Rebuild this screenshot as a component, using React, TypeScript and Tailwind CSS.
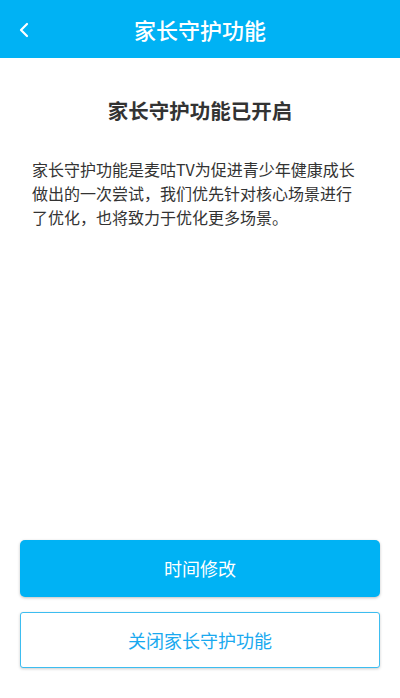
import React from "react";

export default function App() {
  const font = { fontFamily: '"Noto Sans CJK SC", "Noto Sans", sans-serif' };
  return (
    <div className="w-[400px] h-[698px] bg-white flex flex-col" style={font}>
      <div className="h-[58px] bg-[#00b2f4] flex items-center relative shrink-0">
        <svg className="absolute left-[17px] top-[22px]" width="14" height="16" viewBox="0 0 14 16">
          <path d="M10 2 L4 8 L10 14" fill="none" stroke="white" strokeWidth="2.2" strokeLinecap="round" strokeLinejoin="round" />
        </svg>
        <div className="flex-1 text-center text-white text-[22px] leading-none font-medium">家长守护功能</div>
      </div>
      <div className="pt-[38px] text-center text-[#333333] text-[20.5px] leading-[28px] font-bold">家长守护功能已开启</div>
      <div className="mt-[33px] px-[32px] text-[#333333] text-[16px] leading-[24px] whitespace-nowrap">
        <div>家长守护功能是麦咕TV为促进青少年健康成长</div>
        <div>做出的一次尝试，我们优先针对核心场景进行</div>
        <div>了优化，也将致力于优化更多场景。</div>
      </div>
      <div className="flex-1" />
      <div className="px-[20px] pb-[30px] flex flex-col gap-[15px]">
        <button className="h-[57px] rounded-[5px] bg-[#00b2f4] text-white text-[18px] shadow-[0_1px_3px_rgba(0,0,0,0.25)]">时间修改</button>
        <button className="h-[56px] rounded-[3px] bg-white border-[1.5px] border-[#3dbdf0] text-[#19a9ef] text-[18px] shadow-[0_1px_3px_rgba(0,0,0,0.2)]">关闭家长守护功能</button>
      </div>
    </div>
  );
}
